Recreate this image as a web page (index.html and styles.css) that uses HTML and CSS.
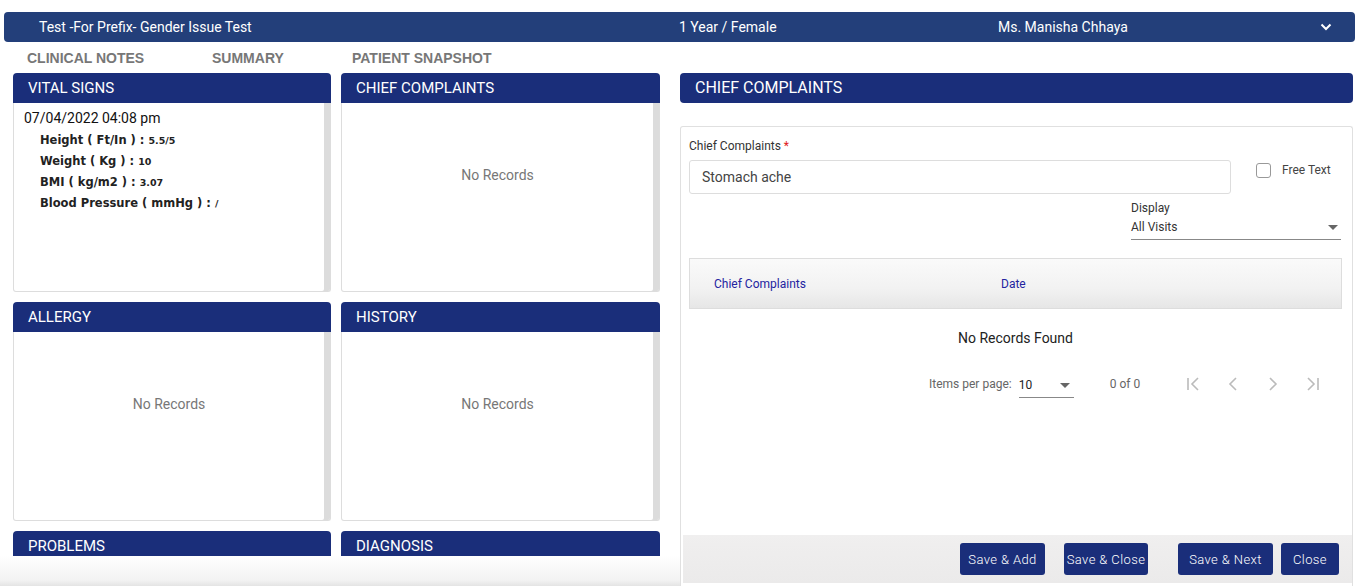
FILE: index.html
```html
<!DOCTYPE html>
<html>
<head>
    <meta charset="UTF-8">
    <title>Clinical Notes - Chief Complaints</title>
    <link rel="stylesheet" href="styles.css">
</head>
<body>

<div class="topbar">
    <span class="pt-name">Test -For Prefix- Gender Issue Test</span>
    <span class="pt-age">1 Year / Female</span>
    <span class="pt-doc">Ms. Manisha Chhaya</span>
    <svg class="chev" width="12" height="8" viewBox="0 0 12 8"><path d="M1.5 1.5 L6 6 L10.5 1.5" fill="none" stroke="#fff" stroke-width="2"/></svg>
</div>

<div class="tabs">
    <span class="tab tab-notes">CLINICAL NOTES</span>
    <span class="tab tab-summary">SUMMARY</span>
    <span class="tab">PATIENT SNAPSHOT</span>
</div>

<div class="main">

    <div class="left-col">
        <div class="panel-grid">
            <div class="panel">
                <div class="panel-head">VITAL SIGNS</div>
                <div class="panel-body">
                    <div class="vital-date">07/04/2022 04:08 pm</div>
                    <div class="vital">Height ( Ft/In ) : <small>5.5/5</small></div>
                    <div class="vital">Weight ( Kg ) : <small>10</small></div>
                    <div class="vital">BMI ( kg/m2 ) : <small>3.07</small></div>
                    <div class="vital">Blood Pressure ( mmHg ) : <small>/</small></div>
                </div>
            </div>
            <div class="panel">
                <div class="panel-head">CHIEF COMPLAINTS</div>
                <div class="panel-body"><div class="no-rec">No Records</div></div>
            </div>
            <div class="panel">
                <div class="panel-head">ALLERGY</div>
                <div class="panel-body"><div class="no-rec">No Records</div></div>
            </div>
            <div class="panel">
                <div class="panel-head">HISTORY</div>
                <div class="panel-body"><div class="no-rec">No Records</div></div>
            </div>
            <div class="panel">
                <div class="panel-head">PROBLEMS</div>
                <div class="panel-body"></div>
            </div>
            <div class="panel">
                <div class="panel-head">DIAGNOSIS</div>
                <div class="panel-body"></div>
            </div>
        </div>
        <div class="fade"></div>
    </div>

    <div class="right-col">
        <div class="right-head">CHIEF COMPLAINTS</div>
        <div class="card">
            <div class="form-row">
                <div class="field">
                    <label class="lbl">Chief Complaints <span class="req">*</span></label>
                    <div class="text-input">Stomach ache</div>
                </div>
                <div class="check">
                    <span class="box"></span>
                    <span>Free Text</span>
                </div>
            </div>

            <div class="display">
                <div class="lbl">Display</div>
                <div class="select">
                    <span>All Visits</span>
                    <span class="caret"></span>
                </div>
            </div>

            <div class="table-head">
                <span class="th th-cc">Chief Complaints</span>
                <span class="th">Date</span>
            </div>
            <div class="empty">No Records Found</div>

            <div class="paginator">
                <span class="pg-label">Items per page:</span>
                <div class="pg-select">
                    <span>10</span>
                    <span class="caret"></span>
                </div>
                <span class="pg-range">0 of 0</span>
                <div class="pg-icons">
                    <svg width="16" height="16" viewBox="0 0 16 16"><path d="M3 2 V14 M13 2 L7 8 L13 14" fill="none" stroke="#bbb" stroke-width="1.6"/></svg>
                    <svg width="16" height="16" viewBox="0 0 16 16"><path d="M11 2 L5 8 L11 14" fill="none" stroke="#bbb" stroke-width="1.6"/></svg>
                    <svg width="16" height="16" viewBox="0 0 16 16"><path d="M5 2 L11 8 L5 14" fill="none" stroke="#bbb" stroke-width="1.6"/></svg>
                    <svg width="16" height="16" viewBox="0 0 16 16"><path d="M3 2 L9 8 L3 14 M13 2 V14" fill="none" stroke="#bbb" stroke-width="1.6"/></svg>
                </div>
            </div>

            <div class="footer">
                <button class="btn btn-add">Save &amp; Add</button>
                <button class="btn btn-close">Save &amp; Close</button>
                <button class="btn btn-next">Save &amp; Next</button>
                <button class="btn btn-only">Close</button>
            </div>
        </div>
    </div>

</div>

</body>
</html>
```

FILE: styles.css
```css
body {
    margin: 0;
    font-family: Roboto, "Liberation Sans", sans-serif;
    background-color: #fff;
    color: #333;
    height: 586px;
    overflow: hidden;
}

.topbar {
    display: flex;
    align-items: center;
    margin: 12px 2px 0 4px;
    height: 30px;
    background-color: #233f7a;
    border-radius: 4px;
    color: #fff;
    font-size: 14px;
}

.pt-name {
    width: 640px;
    padding-left: 35px;
}

.pt-age {
    width: 319px;
}

.pt-doc {
    flex: 1;
}

.chev {
    margin-right: 23px;
}

.tabs {
    height: 31px;
    display: flex;
    align-items: center;
    padding-left: 27px;
    font-family: "Liberation Sans", Arial, sans-serif;
    font-size: 14px;
    font-weight: bold;
    color: #777;
}

.tab-notes {
    width: 185px;
}

.tab-summary {
    width: 140px;
}

.main {
    display: flex;
    height: 513px;
}

.left-col {
    position: relative;
    width: 680px;
    overflow: hidden;
}

.panel-grid {
    display: grid;
    grid-template-columns: 318px 319px;
    gap: 10px;
    padding-left: 13px;
}

.panel-head {
    height: 30px;
    line-height: 30px;
    background-color: #1a2e7a;
    color: #fff;
    font-size: 15px;
    padding-left: 15px;
    border-radius: 4px 4px 0 0;
}

.panel-body {
    height: 188px;
    border: 1px solid #ddd;
    border-top: none;
    border-radius: 0 0 3px 3px;
    box-shadow: inset -6px 0 0 #dcdcdc;
}

.vital-date {
    padding: 7px 0 0 10px;
    font-size: 14px;
    line-height: 17px;
    color: #111;
}

.vital {
    padding-left: 26px;
    font-family: "DejaVu Sans", Verdana, sans-serif;
    font-weight: bold;
    font-size: 11.5px;
    color: #222;
    margin-top: 5px;
    height: 16px;
    line-height: 16px;
}

.vital small {
    font-size: 9.5px;
    line-height: 1;
}

.no-rec {
    padding: 64px 6px 0 0;
    text-align: center;
    font-size: 14px;
    color: #777;
}

.fade {
    position: absolute;
    left: 0;
    right: 0;
    bottom: 0;
    height: 30px;
    background: linear-gradient(#fff, #f3f3f3 80%, #e4e4e4);
}

.right-col {
    width: 673px;
}

.right-head {
    height: 30px;
    line-height: 30px;
    background-color: #1a2e7a;
    color: #fff;
    font-size: 16px;
    padding-left: 15px;
    border-radius: 4px;
}

.card {
    margin-top: 23px;
    height: 448px;
    border: 1px solid #e0e0e0;
    border-bottom: none;
    border-radius: 3px 3px 0 0;
    padding: 11px 10px 0 8px;
    position: relative;
}

.form-row {
    display: flex;
}

.field {
    width: 542px;
}

.lbl {
    display: block;
    font-size: 12px;
    color: #333;
    line-height: 17px;
}

.req {
    color: #e02020;
}

.text-input {
    margin-top: 5px;
    height: 32px;
    line-height: 32px;
    border: 1px solid #ddd;
    border-radius: 3px;
    padding-left: 12px;
    font-size: 14px;
    color: #444;
}

.check {
    display: flex;
    align-items: center;
    gap: 11px;
    margin: 24px 0 0 25px;
    font-size: 12px;
    color: #444;
    height: 16px;
}

.box {
    width: 13px;
    height: 13px;
    border: 1px solid #999;
    border-radius: 3px;
}

.display {
    margin: 6px 0 0 442px;
    width: 210px;
}

.select {
    display: flex;
    justify-content: space-between;
    align-items: center;
    height: 20px;
    padding-bottom: 2px;
    border-bottom: 1px solid #888;
    font-size: 12px;
    color: #333;
}

.caret {
    width: 0;
    height: 0;
    border-left: 5px solid transparent;
    border-right: 5px solid transparent;
    border-top: 5px solid #666;
    margin-right: 3px;
}

.table-head {
    margin-top: 18px;
    height: 49px;
    display: flex;
    align-items: center;
    border: 1px solid #ddd;
    background: linear-gradient(#fafafa, #f2f2f2 60%, #e6e6e6);
    font-size: 12px;
}

.th {
    color: #2424a0;
}

.th-cc {
    width: 287px;
    padding-left: 24px;
}

.empty {
    text-align: center;
    font-size: 14px;
    color: #222;
    margin-top: 21px;
}

.paginator {
    display: flex;
    align-items: center;
    margin: 27px 0 0 240px;
    font-size: 12px;
    color: #666;
}

.pg-select {
    display: flex;
    justify-content: space-between;
    align-items: center;
    width: 55px;
    height: 20px;
    margin: 4px 0 -4px 7px;
    border-bottom: 1px solid #888;
    color: #222;
}

.pg-select span:first-child {
    margin-top: -4px;
}

.pg-select .caret {
    margin: -4px 4px 0 0;
}

.pg-range {
    margin-left: 36px;
}

.pg-icons {
    display: flex;
    gap: 24px;
    margin-left: 45px;
}

.footer {
    position: absolute;
    left: 2px;
    right: 0;
    bottom: 3px;
    height: 48px;
    display: flex;
    align-items: center;
    justify-content: flex-end;
    padding-right: 13px;
    background: linear-gradient(#f0efef, #ebeaea);
}

.btn {
    height: 32px;
    background-color: #1a2e7a;
    color: #fff;
    border: none;
    border-radius: 3px;
    font-family: Roboto, "Liberation Sans", sans-serif;
    font-size: 13px;
    font-weight: 300;
    letter-spacing: 0.4px;
    padding: 0;
    cursor: pointer;
}

.btn-add {
    width: 85px;
    margin-right: 19px;
}

.btn-close {
    width: 84px;
    margin-right: 30px;
}

.btn-next {
    width: 95px;
    margin-right: 8px;
}

.btn-only {
    width: 58px;
}
```
